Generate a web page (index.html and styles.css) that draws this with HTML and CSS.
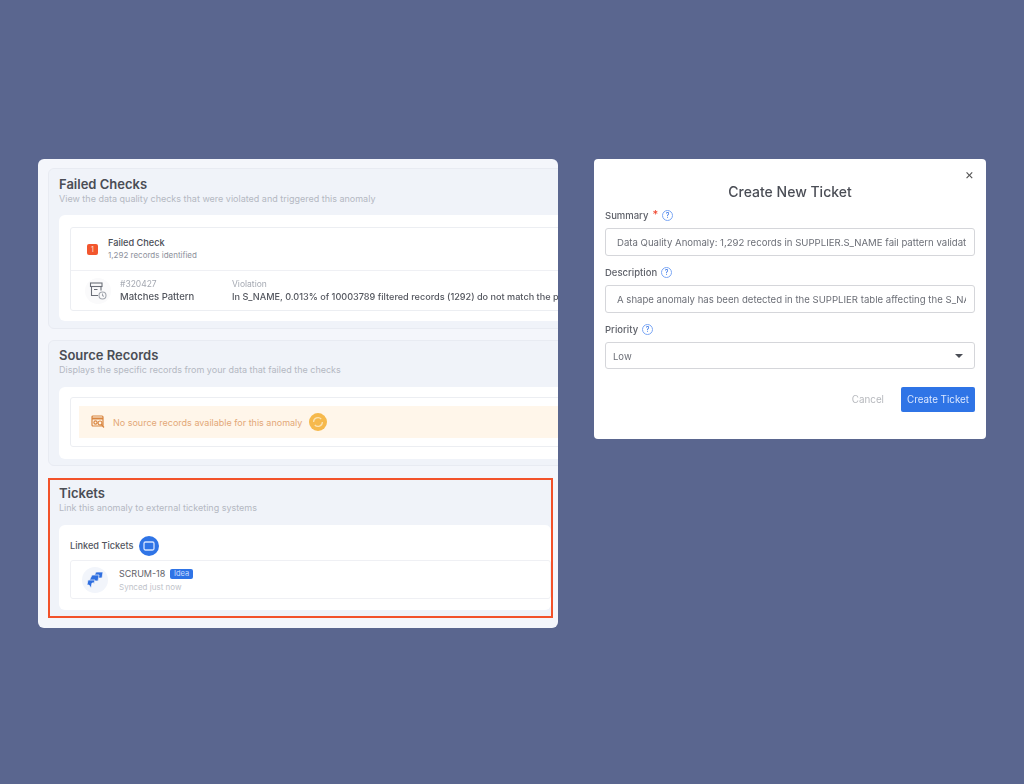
FILE: index.html
```html
<!DOCTYPE html>
<html lang="en">
<head>
    <meta charset="UTF-8">
    <title>Anomaly Tickets</title>
    <link rel="stylesheet" href="styles.css">
</head>
<body>
    <div class="anomaly-card">
        <div class="section section-checks">
            <h2>Failed Checks</h2>
            <p class="subtitle">View the data quality checks that were violated and triggered this anomaly</p>
            <div class="panel">
                <div class="box">
                    <div class="check-head">
                        <span class="count">1</span>
                        <div>
                            <div class="check-title">Failed Check</div>
                            <div class="check-sub">1,292 records identified</div>
                        </div>
                    </div>
                    <div class="check-row">
                        <span class="check-icon">
                            <svg width="18" height="18" viewBox="0 0 18 18" fill="none" stroke="#6b6f78" stroke-width="1.1">
                                <rect x="1.5" y="1" width="11.5" height="3.5"/>
                                <path d="M2.5 4.5v9h6.5"/>
                                <path d="M12 4.5v4"/>
                                <path d="M5 7.5h3.5"/>
                                <circle cx="13.5" cy="13.5" r="3.5" stroke="#a2a6ae"/>
                                <path d="M13.5 11.5v2l1.3 1" stroke="#a2a6ae"/>
                            </svg>
                        </span>
                        <div class="check-id">
                            <div class="meta">#320427</div>
                            <div class="check-name">Matches Pattern</div>
                        </div>
                        <div class="check-violation">
                            <div class="meta">Violation</div>
                            <input class="violation-text" readonly value="In S_NAME, 0.013% of 10003789 filtered records (1292) do not match the pattern">
                        </div>
                    </div>
                </div>
            </div>
        </div>

        <div class="section section-source">
            <h2>Source Records</h2>
            <p class="subtitle">Displays the specific records from your data that failed the checks</p>
            <div class="panel">
                <div class="box box-source">
                    <div class="notice">
                        <svg width="14" height="14" viewBox="0 0 14 14" fill="none" stroke="#d9853f" stroke-width="1.2">
                            <rect x="1" y="1" width="11" height="10" rx="1"/>
                            <path d="M1 3.5h11" stroke-width="2"/>
                            <circle cx="4.5" cy="7.5" r="1.6"/>
                            <circle cx="9" cy="8" r="2"/>
                            <path d="M10.5 9.5l2.5 3"/>
                        </svg>
                        <span>No source records available for this anomaly</span>
                        <span class="refresh">
                            <svg width="12" height="12" viewBox="0 0 12 12" fill="none" stroke="#fbe3b4" stroke-width="1.3">
                                <path d="M1.6 6a4.4 4.4 0 0 1 7.6-3"/>
                                <path d="M10.4 6a4.4 4.4 0 0 1-7.6 3"/>
                            </svg>
                        </span>
                    </div>
                </div>
            </div>
        </div>

        <div class="section section-tickets">
            <h2>Tickets</h2>
            <p class="subtitle">Link this anomaly to external ticketing systems</p>
            <div class="panel panel-tickets">
                <div class="linked-head">
                    <span>Linked Tickets</span>
                    <span class="linked-icon">
                        <svg width="12" height="12" viewBox="0 0 12 12" fill="none" stroke="#d5e3ff" stroke-width="1.3">
                            <rect x="1" y="2" width="10" height="8" rx="1.5"/>
                        </svg>
                    </span>
                </div>
                <div class="ticket-row">
                    <span class="jira-icon">
                        <svg width="17" height="16" viewBox="0 0 17 16" fill="#2f6fe0" stroke="#f2f5fb" stroke-width="0.7">
                            <polygon points="9,0 16,0 15,6 12,6 11,9 8,6 6,6"/>
                            <polygon points="5,3 12,3 11,9 8,9 7,12 4,9 2,9"/>
                            <polygon points="1,8 8,8 7,11 5,11 4,16 2,13 0,13"/>
                        </svg>
                    </span>
                    <div>
                        <div class="ticket-title">SCRUM-18 <span class="tag">Idea</span></div>
                        <div class="ticket-sub">Synced just now</div>
                    </div>
                </div>
            </div>
        </div>
    </div>

    <div class="modal">
        <span class="close">&#215;</span>
        <h1>Create New Ticket</h1>
        <label class="field-label">Summary <span class="req">*</span> <span class="help">?</span></label>
        <input class="input" readonly value="Data Quality Anomaly: 1,292 records in SUPPLIER.S_NAME fail pattern validation">
        <label class="field-label">Description <span class="help">?</span></label>
        <input class="input" readonly value="A shape anomaly has been detected in the SUPPLIER table affecting the S_NAME field">
        <label class="field-label">Priority <span class="help">?</span></label>
        <div class="input select">Low <span class="caret"></span></div>
        <div class="actions">
            <span class="cancel">Cancel</span>
            <span class="create">Create Ticket</span>
        </div>
    </div>
</body>
</html>
```

FILE: styles.css
```css
html, body {
    height: 100%;
}
body {
    margin: 0;
    padding: 159px 0 0 38px;
    box-sizing: border-box;
    display: flex;
    align-items: flex-start;
    gap: 36px;
    background-color: #5a668f;
    font-family: Inter, "Liberation Sans", sans-serif;
    color: #4a4d55;
    overflow: hidden;
}
.anomaly-card {
    width: 520px;
    height: 469px;
    box-sizing: border-box;
    padding: 9px 0 0 10px;
    background-color: #f4f6fb;
    border-radius: 6px;
    overflow: hidden;
    filter: blur(0.35px);
}
.section {
    box-sizing: border-box;
    width: 540px;
    padding: 7px 0 0 10px;
    border: 1px solid #e8ebf2;
    border-radius: 6px;
    background-color: #f0f3f9;
}
.section-checks {
    height: 161px;
}
.section-source {
    height: 126px;
    margin-top: 11px;
    padding-top: 6px;
}
.section-tickets {
    width: 505px;
    height: 140px;
    margin-top: 12px;
    padding: 5px 0 0 9px;
    border: 2px solid #f2522a;
    border-radius: 0;
}
h2 {
    margin: 0;
    font-size: 13px;
    line-height: 17px;
    font-weight: 600;
    color: #4a4d55;
}
.subtitle {
    margin: 0;
    font-size: 9px;
    line-height: 12px;
    color: #b4b8c2;
}
.panel {
    margin-top: 10px;
    padding: 12px 0 0 11px;
    background-color: #fff;
    border-radius: 6px 0 0 6px;
}
.section-checks .panel {
    height: 106px;
    box-sizing: border-box;
}
.section-source .panel {
    height: 72px;
    box-sizing: border-box;
    margin-top: 11px;
    padding-top: 10px;
}
.box {
    border: 1px solid #eceef2;
    border-radius: 3px;
}
.check-head {
    height: 42px;
    display: flex;
    align-items: center;
    gap: 10px;
    padding-left: 16px;
    border-bottom: 1px solid #eff0f4;
}
.count {
    width: 11px;
    height: 11px;
    border-radius: 2px;
    background-color: #f2562e;
    color: #ffe3da;
    font-size: 7px;
    line-height: 11px;
    text-align: center;
}
.check-title {
    font-size: 9.2px;
    line-height: 13px;
    font-weight: 500;
}
.check-sub {
    font-size: 8px;
    line-height: 13px;
    color: #8d919b;
}
.check-row {
    height: 39px;
    display: flex;
    align-items: center;
    padding-left: 14px;
    white-space: nowrap;
}
.check-icon {
    width: 26px;
    height: 26px;
    flex-shrink: 0;
    margin-right: 9px;
    display: flex;
    align-items: center;
    justify-content: center;
    border-radius: 50%;
    background-color: #fafafb;
}
.check-id {
    width: 112px;
    flex-shrink: 0;
}
.meta {
    font-size: 8.5px;
    line-height: 12px;
    color: #a5a9b2;
}
.check-name {
    font-size: 9.5px;
    line-height: 13px;
    font-weight: 500;
    color: #53565e;
}
.violation-text {
    display: block;
    width: 400px;
    height: 13px;
    padding: 0;
    border: 0;
    outline: 0;
    font-family: inherit;
    font-size: 9.15px;
    font-weight: 500;
    color: #53565e;
}
.box-source {
    height: 50px;
    box-sizing: border-box;
    padding: 8px 0 0 8px;
}
.notice {
    height: 32px;
    display: flex;
    align-items: center;
    padding-left: 12px;
    gap: 8px;
    background-color: #fff6ea;
    font-size: 9px;
    color: #e3a877;
}
.refresh {
    width: 18px;
    height: 18px;
    margin-left: -1px;
    display: flex;
    align-items: center;
    justify-content: center;
    border-radius: 50%;
    background-color: #f6b94c;
}
.section-tickets .subtitle {
    line-height: 11px;
}
.panel-tickets {
    width: 492px;
    height: 85px;
    box-sizing: border-box;
    margin-top: 12px;
    padding: 10px 0 0 11px;
    border-radius: 6px;
}
.linked-head {
    display: flex;
    align-items: center;
    gap: 5px;
    height: 21px;
    font-size: 9.2px;
    font-weight: 500;
    color: #53565e;
}
.linked-icon {
    width: 20px;
    height: 20px;
    margin-left: 1px;
    display: flex;
    align-items: center;
    justify-content: center;
    border-radius: 50%;
    background-color: #2f74e6;
}
.ticket-row {
    height: 39px;
    box-sizing: border-box;
    margin-top: 4px;
    display: flex;
    align-items: center;
    gap: 11px;
    padding-left: 11px;
    border: 1px solid #eff0f4;
    border-radius: 3px;
}
.jira-icon {
    width: 26px;
    height: 26px;
    display: flex;
    align-items: center;
    justify-content: center;
    border-radius: 50%;
    background-color: #f2f5fb;
}
.ticket-title {
    font-size: 9px;
    line-height: 14px;
    color: #5f626a;
}
.tag {
    display: inline-block;
    margin-left: 2px;
    padding: 0 4px;
    border-radius: 2px;
    background-color: #2f74e6;
    color: #c9dcff;
    font-size: 7.5px;
    line-height: 10px;
    vertical-align: 1px;
}
.ticket-sub {
    font-size: 8px;
    line-height: 12px;
    color: #c0c3ca;
}
.modal {
    position: relative;
    width: 392px;
    height: 280px;
    box-sizing: border-box;
    padding: 24px 11px 0;
    background-color: #fff;
    border-radius: 4px;
    filter: blur(0.35px);
}
.close {
    position: absolute;
    top: 8px;
    right: 12px;
    font-size: 14px;
    line-height: 14px;
    color: #555;
}
h1 {
    margin: 0 0 7px;
    font-size: 14px;
    line-height: 18px;
    font-weight: 500;
    text-align: center;
    color: #4a4d55;
}
.field-label {
    display: flex;
    align-items: center;
    gap: 4px;
    height: 14px;
    font-size: 9.5px;
    font-weight: 500;
    color: #5f626a;
}
.req {
    align-self: flex-start;
    font-size: 11px;
    line-height: 12px;
    color: #f0442c;
}
.help {
    width: 9px;
    height: 9px;
    border: 1.5px solid #7ba7f5;
    border-radius: 50%;
    font-size: 7px;
    line-height: 9px;
    text-align: center;
    color: #3f7be8;
}
.input {
    display: block;
    width: 100%;
    height: 28px;
    box-sizing: border-box;
    margin: 6px 0 9px;
    padding: 0 8px 0 11px;
    border: 1px solid #d5d6da;
    border-radius: 3px;
    outline: 0;
    font-family: inherit;
    font-size: 9.6px;
    color: #6c6f77;
}
.select {
    position: relative;
    height: 27px;
    padding-left: 7px;
    line-height: 27px;
    font-size: 9.5px;
}
.caret {
    position: absolute;
    top: 11px;
    right: 11px;
    border-left: 4px solid transparent;
    border-right: 4px solid transparent;
    border-top: 4px solid #4a4d55;
}
.actions {
    display: flex;
    justify-content: flex-end;
    align-items: center;
    gap: 17px;
    margin-top: 18px;
    font-size: 9.8px;
}
.cancel {
    color: #b6b8bd;
}
.create {
    width: 74px;
    height: 25px;
    border-radius: 2px;
    background-color: #2f74e6;
    color: #dbe7ff;
    line-height: 25px;
    text-align: center;
}
```
